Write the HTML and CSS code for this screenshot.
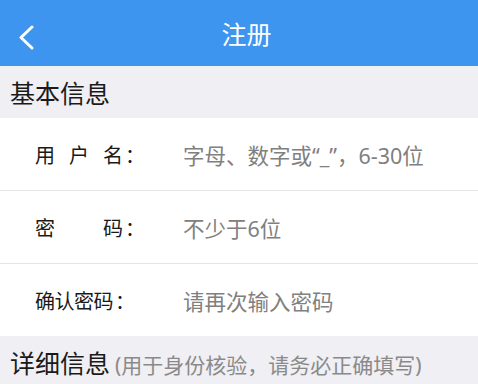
FILE: index.html
```html
<!DOCTYPE html>
<html lang="zh-CN">
<head>
<meta charset="utf-8">
<title>注册</title>
<link rel="stylesheet" href="styles.css">
</head>
<body>
<div class="page">
  <header class="topbar">
    <svg class="back" width="20" height="30" viewBox="0 0 20 30"><polyline points="14,2 3,12.5 14,23" fill="none" stroke="#fff" stroke-width="3" stroke-linecap="round" stroke-linejoin="round"/></svg>
    <h1 class="title">注册</h1>
  </header>
  <div class="section">基本信息</div>
  <div class="form">
    <div class="row">
      <div class="label"><span class="chars"><span>用</span><span>户</span><span>名</span></span><span class="colon">：</span></div>
      <div class="ph">字母、数字或“_”，6-30位</div>
    </div>
    <div class="row">
      <div class="label"><span class="chars"><span>密</span><span>码</span></span><span class="colon">：</span></div>
      <div class="ph">不少于6位</div>
    </div>
    <div class="row">
      <div class="label"><span class="chars four"><span>确</span><span>认</span><span>密</span><span>码</span></span><span class="colon">：</span></div>
      <div class="ph">请再次输入密码</div>
    </div>
  </div>
  <div class="section">详细信息<span class="note">(用于身份核验，请务必正确填写)</span></div>
</div>
</body>
</html>
```
FILE: styles.css
```css
html, body { margin: 0; padding: 0; }
body {
  width: 478px;
  height: 384px;
  overflow: hidden;
  background: #efeff4;
  font-family: "Noto Sans", "Noto Sans CJK SC", sans-serif;
}
.page { display: flex; flex-direction: column; }
.topbar {
  height: 66px;
  background: #3d95f0;
  display: flex;
  align-items: center;
  justify-content: center;
  position: relative;
}
.back { position: absolute; left: 18px; top: 25px; }
.title {
  margin: 0;
  color: #fff;
  font-weight: 400;
  font-size: 25px;
  line-height: 1;
  margin-left: 15px;
  margin-top: 2px;
}
.section {
  height: 52px;
  display: flex;
  align-items: center;
  padding-left: 10px;
  font-size: 25px;
  color: #1a1a1a;
  background: #efeff4;
}
.note {
  font-size: 21px;
  color: #8a8a8a;
  margin-left: 5px;
  margin-top: 3px;
}
.form { background: #fff; }
.row {
  height: 72px;
  display: flex;
  align-items: center;
  border-bottom: 1px solid #e6e6e6;
  font-size: 20px;
}
.row:last-child { border-bottom: none; }
.label {
  display: flex;
  align-items: center;
  padding-left: 35px;
  width: 148px;
  color: #1a1a1a;
}
.chars {
  display: flex;
  justify-content: space-between;
  width: 88px;
}
.chars.four { width: 78px; }
.chars.four span { width: 19.5px; }
.colon { margin-left: 2px; }
.ph { color: #808080; font-size: 21.5px; }
```
